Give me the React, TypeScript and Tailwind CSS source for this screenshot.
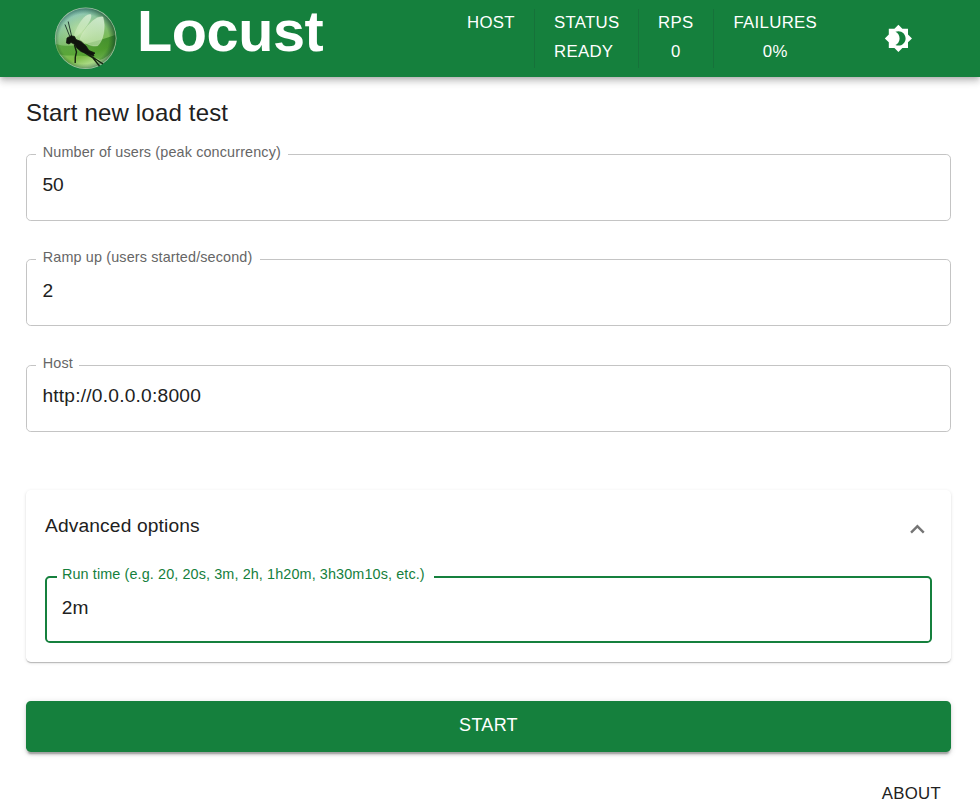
import type { ReactNode } from "react";

function LocustLogo() {
  return (
    <svg className="size-[64px] shrink-0" viewBox="0 0 64 64" aria-hidden="true">
      <defs>
        <linearGradient id="orb" x1="0.15" y1="0.05" x2="0.5" y2="1">
          <stop offset="0" stopColor="#86c4d0" />
          <stop offset="0.3" stopColor="#8cc596" />
          <stop offset="0.56" stopColor="#7cbb62" />
          <stop offset="0.8" stopColor="#7cbd48" />
          <stop offset="1" stopColor="#bce59c" />
        </linearGradient>
        <radialGradient id="edge" cx="0.47" cy="0.51" r="0.53">
          <stop offset="0.78" stopColor="#174f29" stopOpacity="0" />
          <stop offset="1" stopColor="#10432c" stopOpacity="0.7" />
        </radialGradient>
        <radialGradient id="glow" cx="0.42" cy="0.4" r="0.38">
          <stop offset="0" stopColor="#d5efb8" stopOpacity="0.75" />
          <stop offset="1" stopColor="#a8d685" stopOpacity="0" />
        </radialGradient>
        <linearGradient id="shade" x1="0.2" y1="0.6" x2="1" y2="0">
          <stop offset="0" stopColor="#3e9422" stopOpacity="0.55" />
          <stop offset="1" stopColor="#2b7a1c" stopOpacity="0.75" />
        </linearGradient>
        <linearGradient id="wing" x1="0.7" y1="0" x2="0.3" y2="1">
          <stop offset="0" stopColor="#d5edd2" stopOpacity="0.85" />
          <stop offset="1" stopColor="#cce9b7" stopOpacity="0.55" />
        </linearGradient>
      </defs>
      <circle cx="31.7" cy="32.3" r="30.8" fill="#a3c3a4" />
      <circle cx="31.7" cy="32.3" r="30" fill="url(#orb)" />
      <circle cx="31.7" cy="32.3" r="30" fill="url(#glow)" />
      <path d="M2 38C17 43 38 37 61 29C63 42 54 52 46 54C34 47 14 52 5 48C3 45 2 41 2 38Z" fill="url(#shade)" />
      <circle cx="31.7" cy="32.3" r="30" fill="url(#edge)" />
      <path d="M20 29C24 18 31 7 37 8.5C39 13 30 25 22 31Z" fill="url(#wing)" />
      <path d="M26 33C31 21 42 9 49 11C52 21 49.5 34 44 39.5C39 41.5 32 38 26 33Z" fill="url(#wing)" stroke="#e3f3d5" strokeOpacity="0.5" strokeWidth="0.6" />
      <path d="M15.6 30L11 18.5M17.6 30L14.2 15.5" stroke="#172c27" strokeWidth="0.9" fill="none" />
      <path d="M12.4 37L13 32L17 29.7L20.5 30.5L22 33.5L27 35.5L32 40L35 44.5L41 47L39.5 48.5L40 50L33 48L27 45.5L23 42L20 38L17 36.5L15 38Z" fill="#10140d" stroke="#10140d" strokeWidth="0.7" strokeLinejoin="round" />
      <path d="M20.5 39L22.5 46L21.3 51L21.2 57M31 47L39 52L45.5 60M34 48L40 52L49 58" stroke="#14200f" strokeWidth="1.4" fill="none" />
    </svg>
  );
}

function Stat({ title, value }: { title: string; value?: string }) {
  return (
    <div className="-mt-px flex h-[58px] flex-col text-[16.8px] leading-[29px] tracking-[0.3px] whitespace-nowrap">
      <span className="h-[29px]">{title}</span>
      {value && <span className={value === "READY" ? "" : "text-center"}>{value}</span>}
    </div>
  );
}

function Divider() {
  return <div className="h-[59px] w-px shrink-0 bg-[#16723a]" />;
}

function Field({ label, value, notch, className = "", valueClass = "pt-[7px]" }: { label: string; value: string; notch: string; className?: string; valueClass?: string }) {
  return (
    <fieldset className={`h-[77px] min-w-0 rounded-[4.8px] border border-[#c4c4c4] pl-[9px] ${className}`}>
      <legend className={`h-[20px] pl-[6.8px] text-[14.4px] leading-[16px] tracking-[0.135px] whitespace-nowrap text-[#666666] ${notch}`}>
        {label}
      </legend>
      <div className={`pl-[6.4px] text-[19.2px] leading-[28px] text-[#212121] ${valueClass}`}>{value}</div>
    </fieldset>
  );
}

function Panel({ children }: { children: ReactNode }) {
  return (
    <section className="mt-[58px] h-[172px] rounded-[4.8px] bg-white px-[19px] shadow-[0_2px_1px_-1px_rgba(0,0,0,0.12),0_1px_1px_rgba(0,0,0,0.12),0_1px_3.6px_rgba(0,0,0,0.12)]">
      {children}
    </section>
  );
}

export default function App() {
  return (
    <div className="h-[811px] overflow-hidden bg-white font-['Liberation_Sans',Arial,sans-serif] text-[#212121]">
      <header className="flex h-[77px] bg-[#15803d] pl-[54px] text-white shadow-[0_2.4px_4.8px_-1.2px_rgba(0,0,0,0.2),0_4.8px_6px_rgba(0,0,0,0.14),0_1.2px_12px_rgba(0,0,0,0.12)]">
        <div className="pt-[6px]">
          <LocustLogo />
        </div>
        <h1 className="ml-[19px] w-[330px] pt-[1px] text-[57.6px] leading-[60px] font-bold tracking-[-0.4px]">Locust</h1>
        <div className="flex pt-[9px]">
          <div className="flex w-[67px]"><Stat title="HOST" /></div>
          <Divider />
          <div className="flex w-[103px] pl-[19px]"><Stat title="STATUS" value="READY" /></div>
          <Divider />
          <div className="flex w-[74px] pl-[19px]"><Stat title="RPS" value="0" /></div>
          <Divider />
          <div className="flex w-[103px] pl-[19.5px]"><Stat title="FAILURES" value="0%" /></div>
        </div>
        <button className="mt-[24px] ml-[67px] size-[28.8px]" aria-label="Toggle theme">
          <svg viewBox="0 0 24 24" className="size-[28.8px]" fill="currentColor">
            <path d="M20 8.69V4h-4.69L12 .69 8.69 4H4v4.69L.69 12 4 15.31V20h4.69L12 23.31 15.31 20H20v-4.69L23.31 12 20 8.69zM12 18c-.89 0-1.74-.2-2.5-.55C11.56 16.5 13 14.42 13 12s-1.44-4.5-3.5-5.45C10.26 6.2 11.11 6 12 6c3.31 0 6 2.69 6 6s-2.69 6-6 6z" />
          </svg>
        </button>
      </header>
      <main className="mr-[29px] ml-[26px]">
        <h2 className="pt-[17px] text-[24px] leading-[38px] tracking-[0.18px]">Start new load test</h2>
        <div className="mt-[12px] flex flex-col">
          <Field label="Number of users (peak concurrency)" value="50" notch="w-[252px]" />
          <Field label="Ramp up (users started/second)" value="2" notch="w-[224px]" className="mt-[28px]" valueClass="pt-[8px]" />
          <Field label="Host" value="http://0.0.0.0:8000" notch="w-[43px]" className="mt-[29px]" valueClass="pt-[7px] tracking-[0.21px]" />
        </div>
        <Panel>
          <div className="flex h-[76px] items-center justify-between">
            <h3 className="pb-[4px] text-[19.2px] leading-[28px] tracking-[0.14px]">Advanced options</h3>
            <svg viewBox="0 0 24 24" className="mt-[2px] size-[28.8px]" fill="#757575">
              <path d="M12 8l-6 6 1.41 1.41L12 10.83l4.59 4.58L18 14z" />
            </svg>
          </div>
          <fieldset className="h-[77px] min-w-0 rounded-[4.8px] border-2 border-[#15803d] pl-[10px]">
            <legend className="h-[21px] w-[377px] pl-[5px] text-[14.4px] leading-[16px] tracking-[0.11px] whitespace-nowrap text-[#15803d]">
              Run time (e.g. 20, 20s, 3m, 2h, 1h20m, 3h30m10s, etc.)
            </legend>
            <div className="pl-[4.8px] pt-[7px] text-[19.2px] leading-[28px]">2m</div>
          </fieldset>
        </Panel>
        <button className="mt-[39px] block h-[51px] w-full rounded-[4.8px] bg-[#15803d] pb-[3px] text-[18px] tracking-[0.3px] text-white shadow-[0_3.6px_1.2px_-2.4px_rgba(0,0,0,0.2),0_2.4px_2.4px_rgba(0,0,0,0.14),0_1.2px_6px_rgba(0,0,0,0.12)]">
          START
        </button>
        <footer className="mt-[27px] flex justify-end pr-[10px] text-[16.8px] leading-[29px] tracking-[0.3px]">ABOUT</footer>
      </main>
    </div>
  );
}
